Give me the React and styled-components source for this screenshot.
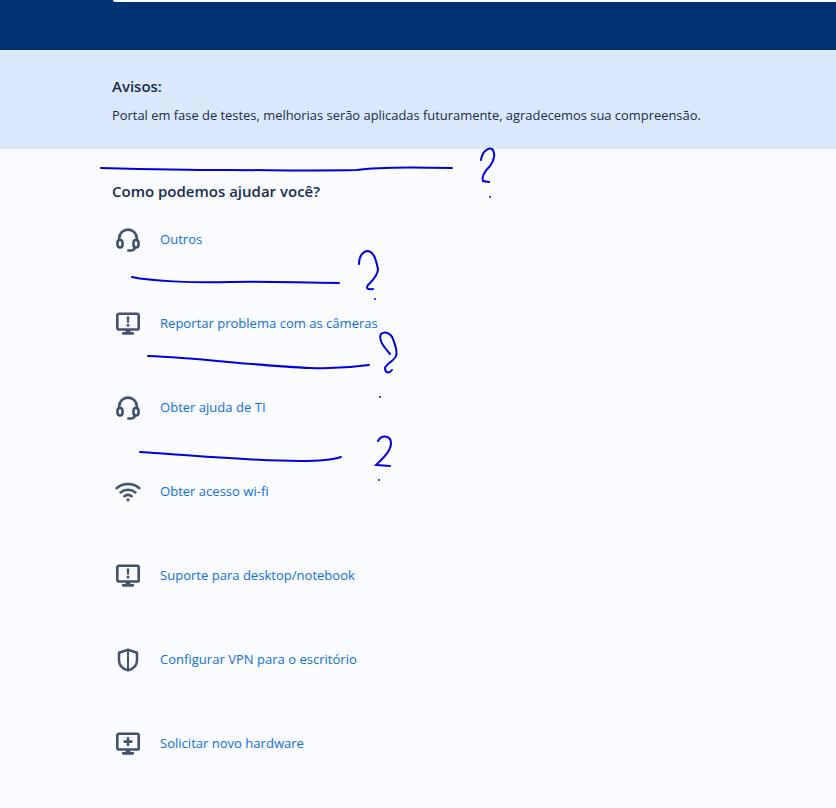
import React from 'react'
import styled, { createGlobalStyle } from 'styled-components'

const GlobalStyle = createGlobalStyle`
  html, body {
    margin: 0;
    padding: 0;
    background: #fafcff;
  }
  body {
    font-family: "Open Sans", "Noto Sans", sans-serif;
  }
`

const Page = styled.div`
  position: relative;
  width: 836px;
  height: 808px;
  overflow: hidden;
  background: #fafcff;
`

const Header = styled.header`
  height: 50px;
  background: #003273;
  padding-left: 113px;
`

const SearchEdge = styled.div`
  height: 2px;
  background: #fff;
  border-bottom-left-radius: 3px;
`

const Notice = styled.section`
  height: 99px;
  box-sizing: border-box;
  padding: 26px 112px 0;
  background: #d9e9fb;
`

const NoticeTitle = styled.h2`
  margin: 0 0 9px;
  font-size: 15px;
  line-height: 20px;
  font-weight: 600;
  color: #172b4d;
`

const NoticeText = styled.p`
  margin: 0;
  font-size: 12.92px;
  line-height: 20px;
  color: #172b4d;
  white-space: nowrap;
`

const Main = styled.main`
  padding: 32px 112px 0;
`

const Title = styled.h1`
  margin: 0 0 14px;
  font-size: 15px;
  line-height: 20px;
  font-weight: 600;
  color: #172b4d;
`

const List = styled.ul`
  margin: -18px 0 0;
  padding: 0;
  list-style: none;
`

const Item = styled.li`
  display: flex;
  align-items: center;
  gap: 16px;
  height: 84px;
`

const IconBox = styled.span`
  display: flex;
  width: 32px;
  height: 32px;
  margin-top: 2px;
  align-items: center;
  justify-content: center;
  color: #42526e;
`

const ItemLink = styled.a`
  font-size: 13.05px;
  line-height: 20px;
  color: #0a70dc;
  text-decoration: none;
  white-space: nowrap;
`

const Scribbles = styled.svg`
  position: absolute;
  left: 0;
  top: 0;
  pointer-events: none;
`

const Headset = () => (
  <svg width="24" height="24" viewBox="0 0 24 24" fill="none" stroke="currentColor" strokeWidth="2.6" strokeLinecap="round" strokeLinejoin="round">
    <path d="M3.2 12V10.4a8.8 8.8 0 0 1 17.6 0V12" />
    <rect x="1.5" y="12" width="5" height="7.4" rx="2.3" />
    <rect x="17.5" y="12" width="5" height="7.4" rx="2.3" />
    <path d="M18.8 19.4c0 1.9-1.8 3.1-3.8 3.1h-2.6" />
  </svg>
)

const MonitorShape = ({ children }) => (
  <svg width="24" height="24" viewBox="0 0 24 24" fill="none">
    <rect x="1.3" y="1.7" width="21.4" height="15.8" rx="1.6" stroke="currentColor" strokeWidth="2.6" />
    <path d="M9.6 17.5h4.8v3h-4.8z" fill="currentColor" />
    <rect x="6" y="20" width="12" height="2.8" rx="1" fill="currentColor" />
    {children}
  </svg>
)

const MonitorAlert = () => (
  <MonitorShape>
    <path d="M10.7 4.6h2.6l-.3 6.2h-2z" fill="currentColor" />
    <circle cx="12" cy="13.2" r="1.45" fill="currentColor" />
  </MonitorShape>
)

const MonitorPlus = () => (
  <MonitorShape>
    <path d="M12 5.2v8.8M7.6 9.6h8.8" stroke="currentColor" strokeWidth="2.6" />
  </MonitorShape>
)

const Wifi = () => (
  <svg width="26" height="24" viewBox="0 0 26 24" fill="none" stroke="currentColor" strokeWidth="2.5" strokeLinecap="round">
    <path d="M1.6 8.2C7.8 2.6 18.2 2.6 24.4 8.2" />
    <path d="M5.6 12.4c4.2-3.6 10.6-3.6 14.8 0" />
    <path d="M9.4 16.2c2.2-1.6 5-1.6 7.2 0" />
    <circle cx="13" cy="19.8" r="1.6" fill="currentColor" stroke="none" />
  </svg>
)

const Shield = () => (
  <svg width="24" height="24" viewBox="0 0 24 24" fill="none">
    <path d="M12 1.8 21 4.8v7.4c0 5-3.6 8.6-9 10.2-5.4-1.6-9-5.2-9-10.2V4.8z" stroke="currentColor" strokeWidth="2.5" strokeLinejoin="round" />
    <path d="M12 2.6v19" stroke="currentColor" strokeWidth="2" />
  </svg>
)

const ITEMS = [
  { label: 'Outros', Icon: Headset },
  { label: 'Reportar problema com as câmeras', Icon: MonitorAlert },
  { label: 'Obter ajuda de TI', Icon: Headset },
  { label: 'Obter acesso wi-fi', Icon: Wifi },
  { label: 'Suporte para desktop/notebook', Icon: MonitorAlert },
  { label: 'Configurar VPN para o escritório', Icon: Shield },
  { label: 'Solicitar novo hardware', Icon: MonitorPlus },
]

// the blue pen marks someone drew over the screenshot
const PEN_STROKES = [
  'M101 168 C140 169 180 170 225 170 C270 170 310 171 357 170 C375 167 410 167 452 168',
  'M481 160 C482 152 488 147 492 149 C496 153 494 161 490 166 C485 171 481 176 483 181 L489 182',
  'M132 277 C150 281 190 283 230 282 C270 281 300 283 339 283',
  'M359 264 C359 256 363 251 368 251 C374 252 376 260 378 269 C378 276 372 281 368 285 C366 288 367 290 373 289',
  'M148 356 C200 358 260 366 310 368 C335 369 355 367 369 365',
  'M390 354 C384 347 378 340 381 334 C385 331 391 333 393 339 C395 345 398 351 396 356 C394 361 386 364 385 368 C385 373 389 374 392 370',
  'M140 452 C190 455 250 461 300 461 C320 461 335 459 341 457',
  'M378 441 C382 434 391 436 391 443 C391 451 383 458 376 465 L390 466',
]

const PEN_DOTS = [
  [490, 197],
  [375, 299],
  [380, 397],
  [379, 480],
]

const App = () => {
  return (
    <Page>
      <GlobalStyle />
      <Header>
        <SearchEdge />
      </Header>
      <Notice>
        <NoticeTitle>Avisos:</NoticeTitle>
        <NoticeText>Portal em fase de testes, melhorias serão aplicadas futuramente, agradecemos sua compreensão.</NoticeText>
      </Notice>
      <Main>
        <Title>Como podemos ajudar você?</Title>
        <List>
          {ITEMS.map(({ label, Icon }) => (
            <Item key={label}>
              <IconBox><Icon /></IconBox>
              <ItemLink href="#">{label}</ItemLink>
            </Item>
          ))}
        </List>
      </Main>
      <Scribbles width="836" height="808" viewBox="0 0 836 808" fill="none" stroke="#0000e6" strokeWidth="2" strokeLinecap="round">
        {PEN_STROKES.map(d => <path key={d} d={d} />)}
        {PEN_DOTS.map(([x, y]) => <circle key={x} cx={x} cy={y} r="1" fill="#0000e6" stroke="none" />)}
      </Scribbles>
    </Page>
  )
}

export default App
